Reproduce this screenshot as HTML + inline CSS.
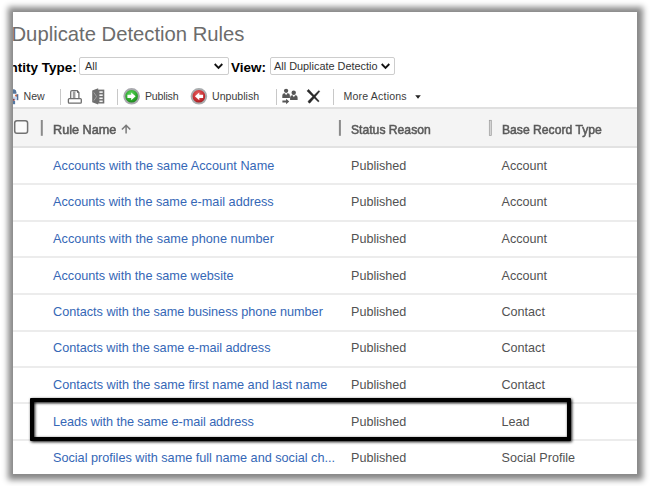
<!DOCTYPE html>
<html><head><meta charset="utf-8">
<style>
html,body{margin:0;padding:0;background:#fff;width:650px;height:486px;overflow:hidden}
body{font-family:"Liberation Sans",sans-serif;position:relative}
#frame{position:absolute;left:13px;top:12px;width:624px;height:462px;background:#fff;box-shadow:0 0 6px 5.5px rgba(0,0,0,0.47);overflow:hidden}
.a{position:absolute;white-space:nowrap;line-height:1}
.t{white-space:nowrap}
#title{left:-1.5px;top:12px;font-size:20.25px;color:#6c6c6c}
.lbl{font-weight:bold;font-size:13.5px;color:#000}
.sel{position:absolute;top:45px;height:16px;border:1px solid #cdcdcd;border-radius:2px;background:#fff}
.seltxt{font-size:10.9px;color:#333}
.chev{position:absolute}
.tb{font-size:10.6px;color:#3c3c3c}
.sep{position:absolute;width:1px;background:#c8c8c8}
#tbline{position:absolute;left:0;top:95.2px;width:624px;height:2px;background:#e0e0e0}
#hdr{position:absolute;left:0;top:97.2px;width:624px;height:36.8px;background:#f4f4f4;border-bottom:2px solid #e2e2e2}
.hd{font-size:13px;font-weight:normal;color:#5a5a5a;-webkit-text-stroke:0.55px #5a5a5a;transform:scaleX(0.935);transform-origin:0 0}
.row{position:absolute;left:0;width:624px;height:2px;background:#ececec}
.lnk{font-size:12.7px;color:#3567b6}
.st{font-size:12.6px;color:#525252}
#hl{position:absolute;left:17px;top:386px;width:533px;height:34.5px;border:4px solid #000;border-radius:1px;filter:drop-shadow(1.8px 1.8px 1.6px rgba(0,0,0,0.95))}
</style></head>
<body>
<div id="frame">
  <div class="a" id="title"><span class="t">Duplicate Detection Rules</span></div>

  <div class="a lbl" style="left:-12.6px;top:49px"><span class="t">Entity Type:</span></div>
  <div class="sel" style="left:66px;width:148px"></div>
  <div class="a seltxt" style="left:72px;top:49px"><span class="t">All</span></div>
  
  <div class="a lbl" style="left:218px;top:49px"><span class="t">View:</span></div>
  <div class="sel" style="left:257px;width:123px"></div>
  <div class="a seltxt" style="left:261px;top:49px"><span class="t">All Duplicate Detectio</span></div>
  
  <!-- toolbar -->
  <div class="a tb" style="left:10.5px;top:79.2px"><span class="t">New</span></div>
  <div class="sep" style="left:47px;top:77px;height:16px"></div>
  <div class="sep" style="left:104px;top:77px;height:16px"></div>
  <div class="a tb" style="left:132px;top:79.2px;letter-spacing:-0.2px"><span class="t">Publish</span></div>
  <div class="a tb" style="left:199px;top:79.2px"><span class="t">Unpublish</span></div>
  <div class="sep" style="left:263px;top:77px;height:16px"></div>
  <div class="sep" style="left:320px;top:77px;height:16px"></div>
  <div class="a tb" style="left:330.5px;top:79.2px;letter-spacing:0.17px"><span class="t">More Actions</span></div>

  <div id="tbline"></div>
  <div id="hdr"></div>
      <div class="a hd" style="left:40px;top:110.5px;transform:scaleX(0.975)"><span class="t">Rule Name</span></div>
    <div class="a hd" style="left:338px;top:110.5px"><span class="t">Status Reason</span></div>
    <div class="a hd" style="left:489px;top:110.5px"><span class="t">Base Record Type</span></div>

<svg id="ov" style="position:absolute;left:-13px;top:-12px" width="650" height="486" viewBox="0 0 650 486">
  <!-- partial new icon -->
  <g>
    <path d="M13 89.2 H14.2 Q16.4 89.6 16.4 92.2 V93.8 H13 Z" fill="#56759b"/>
    <rect x="13" y="94.4" width="2.4" height="2" fill="#f4f6fa"/>
    <rect x="15.1" y="94.4" width="2.5" height="2.4" rx="0.8" fill="#e2622e"/>
    <rect x="16.6" y="94.2" width="1.7" height="6" fill="#4f6f99"/>
    <rect x="13" y="96.6" width="3.6" height="3.4" fill="#c9d8ee"/>
    <rect x="13" y="98.8" width="1.6" height="2" fill="#8a3a40"/>
    <rect x="13" y="101" width="2.1" height="3.2" fill="#5478a3"/>
  </g>
  <!-- print icon -->
  <path d="M70.7 98.3 V92 Q70.7 90.7 72 90.7 H77.2 L78.9 92.4 V98.3" fill="none" stroke="#707070" stroke-width="1.3"/>
  <path d="M77 90.5 L79.2 92.7 L77 92.7 Z" fill="#555"/>
  <rect x="72.8" y="91.4" width="2.6" height="6.9" fill="#9c9c9c"/>
  <rect x="68.4" y="98.6" width="12.9" height="4.5" rx="0.9" fill="#fff" stroke="#6e6e6e" stroke-width="1.3"/>
  <!-- excel icon -->
  <path d="M92.2 90.6 L98.2 88.2 V104.5 L92.2 102.3 Z" fill="#6f6f6f"/>
  <path d="M93.8 92.4 L96.6 96.6 L93.8 100.6" fill="none" stroke="#a0a0a0" stroke-width="1"/>
  <rect x="98" y="89.6" width="6.3" height="13.9" fill="#707070"/>
  <rect x="99.4" y="91.3" width="3.3" height="1.6" fill="#f4f4f4"/>
  <rect x="99.4" y="94.4" width="3.3" height="1.6" fill="#f4f4f4"/>
  <rect x="99.4" y="97.5" width="3.3" height="1.6" fill="#f4f4f4"/>
  <rect x="99.4" y="100.5" width="3.3" height="1.6" fill="#f4f4f4"/>
  <!-- green publish -->
  <defs>
    <radialGradient id="gg" cx="0.45" cy="0.35" r="0.7"><stop offset="0" stop-color="#5fd85f"/><stop offset="0.6" stop-color="#2aa52a"/><stop offset="1" stop-color="#137013"/></radialGradient>
    <radialGradient id="rg" cx="0.45" cy="0.35" r="0.7"><stop offset="0" stop-color="#e86060"/><stop offset="0.6" stop-color="#c42c30"/><stop offset="1" stop-color="#8e1519"/></radialGradient>
  </defs>
  <circle cx="131.6" cy="96.3" r="7.3" fill="url(#gg)" stroke="#a9a9ae" stroke-width="2"/>
  <path d="M127.4 94.7 H131.2 V92.4 L135.6 96.3 L131.2 100.2 V97.9 H127.4 Z" fill="#fff"/>
  <!-- red unpublish -->
  <circle cx="198.9" cy="96.3" r="7.3" fill="url(#rg)" stroke="#a9acae" stroke-width="2"/>
  <path d="M203.1 94.7 H199.3 V92.4 L194.9 96.3 L199.3 100.2 V97.9 H203.1 Z" fill="#fff"/>
  <!-- people -->
  <g fill="#575757">
    <circle cx="286.1" cy="90.8" r="2.15"/>
    <path d="M282.3 97.9 V95.4 Q282.3 93.2 284.5 93.2 H284.9 L286.1 95.2 L287.3 93.2 H287.7 Q289.9 93.2 289.9 95.4 V97.9 Z"/>
    <circle cx="293.7" cy="92.8" r="2.2"/>
    <path d="M290.1 99.9 V97.5 Q290.1 95.3 292.3 95.3 H292.6 L293.85 97.3 L295.1 95.3 H295.4 Q297.6 95.3 297.6 97.5 V99.9 Z"/>
    <path d="M282.4 100.6 H286.1 V98.8 L289.2 101.5 L286.1 104.3 V102.4 H282.4 Z"/>
  </g>
  <!-- X -->
  <g fill="#2b2b2b" stroke="#2b2b2b" stroke-width="0.35" stroke-linejoin="round"><path d="M306.9 91.0 L308.6 89.3 L319.2 101.1 L318.3 102.0 Z"/><path d="M319.8 91.4 L318.8 90.5 L308.0 101.3 Q308.6 103.6 310.0 103.1 Z"/></g>
  <!-- more actions triangle -->
  <path d="M415.2 95.2 H420.8 L418 98.8 Z" fill="#222"/>
  <!-- select chevrons -->
  <path d="M214.7 64.0 L218.5 67.9 L222.3 64.0" fill="none" stroke="#111" stroke-width="1.8"/>
  <path d="M381.7 64.0 L385.5 67.9 L389.3 64.0" fill="none" stroke="#111" stroke-width="1.8"/>
  <rect x="14.7" y="120.7" width="12.9" height="12.5" rx="2.3" fill="#fbfbfb" stroke="#727272" stroke-width="1.5"/>
  <!-- header arrow -->
  <path d="M126.1 125.6 V133.6 M121.9 129.6 L126.1 125.3 L130.3 129.6" fill="none" stroke="#7a7a7a" stroke-width="1.5"/>
  <!-- header separators -->
  <rect x="40.8" y="120" width="2" height="15.8" fill="#8a8a8a"/>
  <rect x="338.9" y="120" width="2" height="15.8" fill="#8a8a8a"/>
  <rect x="489.3" y="120.3" width="2" height="15.3" fill="#d8d8d8" stroke="#9a9a9a" stroke-width="0.7"/>
</svg>
  <!-- rows -->
  <div id="rows">
<!--ROWS-->
<div class="a lnk" style="left:40px;top:148.04px;letter-spacing:0.04px"><span class="t">Accounts with the same Account Name</span></div>
<div class="a st" style="left:338px;top:148.04px"><span class="t">Published</span></div>
<div class="a st" style="left:488.5px;top:148.04px"><span class="t">Account</span></div>
<div class="row" style="top:171.00px"></div>
<div class="a lnk" style="left:40px;top:183.94px"><span class="t">Accounts with the same e-mail address</span></div>
<div class="a st" style="left:338px;top:183.94px"><span class="t">Published</span></div>
<div class="a st" style="left:488.5px;top:183.94px"><span class="t">Account</span></div>
<div class="row" style="top:207.90px"></div>
<div class="a lnk" style="left:40px;top:221.04px;letter-spacing:0.045px"><span class="t">Accounts with the same phone number</span></div>
<div class="a st" style="left:338px;top:221.04px"><span class="t">Published</span></div>
<div class="a st" style="left:488.5px;top:221.04px"><span class="t">Account</span></div>
<div class="row" style="top:243.90px"></div>
<div class="a lnk" style="left:40px;top:257.84px"><span class="t">Accounts with the same website</span></div>
<div class="a st" style="left:338px;top:257.84px"><span class="t">Published</span></div>
<div class="a st" style="left:488.5px;top:257.84px"><span class="t">Account</span></div>
<div class="row" style="top:280.60px"></div>
<div class="a lnk" style="left:40px;top:293.74px;letter-spacing:-0.022px"><span class="t">Contacts with the same business phone number</span></div>
<div class="a st" style="left:338px;top:293.74px"><span class="t">Published</span></div>
<div class="a st" style="left:488.5px;top:293.74px"><span class="t">Contact</span></div>
<div class="row" style="top:317.50px"></div>
<div class="a lnk" style="left:40px;top:330.34px;letter-spacing:-0.03px"><span class="t">Contacts with the same e-mail address</span></div>
<div class="a st" style="left:338px;top:330.34px"><span class="t">Published</span></div>
<div class="a st" style="left:488.5px;top:330.34px"><span class="t">Contact</span></div>
<div class="row" style="top:353.90px"></div>
<div class="a lnk" style="left:40px;top:367.14px"><span class="t">Contacts with the same first name and last name</span></div>
<div class="a st" style="left:338px;top:367.14px"><span class="t">Published</span></div>
<div class="a st" style="left:488.5px;top:367.14px"><span class="t">Contact</span></div>
<div class="row" style="top:390.30px"></div>
<div class="a lnk" style="left:40px;top:404.14px;letter-spacing:-0.068px"><span class="t">Leads with the same e-mail address</span></div>
<div class="a st" style="left:338px;top:404.14px"><span class="t">Published</span></div>
<div class="a st" style="left:488.5px;top:404.14px"><span class="t">Lead</span></div>
<div class="row" style="top:427.40px"></div>
<div class="a lnk" style="left:40px;top:440.14px;letter-spacing:-0.015px"><span class="t">Social profiles with same full name and social ch...</span></div>
<div class="a st" style="left:338px;top:440.14px"><span class="t">Published</span></div>
<div class="a st" style="left:488.5px;top:440.14px"><span class="t">Social Profile</span></div>
<!--/ROWS-->
</div>
  <div id="hl"></div>
</div>
</body></html>
